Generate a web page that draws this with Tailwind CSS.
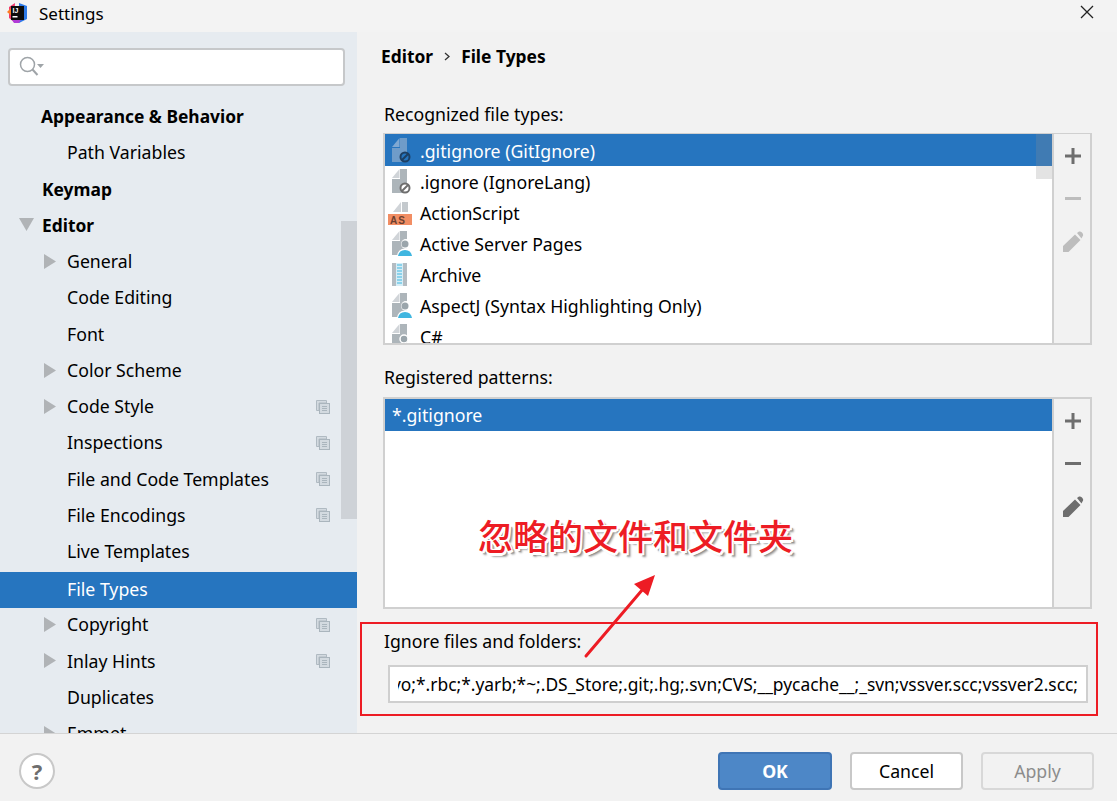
<!DOCTYPE html>
<html lang="en">
<head>
    <meta charset="UTF-8">
    <title>Settings</title>
    <script src="https://cdn.jsdelivr.net/npm/@tailwindcss/browser@4"></script>
</head>
<body class="bg-[#f2f2f2]">
    <svg width="0" height="0" class="absolute">
        <defs>
            <symbol id="file" viewBox="0 0 24 28">
                <path d="M11 2 H18 V26 H3 V12 H11 Z" fill="#adb5ba"/>
                <path d="M3 11 L10.500 2 V11 Z" fill="#d0d4d8"/>
            </symbol>
            <symbol id="copy" viewBox="0 0 14 14">
                <path d="M0.5 0.5 H10.5 V3 H3 V10.5 H0.5 Z" fill="#d3dae0" stroke="#b0bac2"/>
                <rect x="3.5" y="3.5" width="10" height="10" fill="#d3dae0" stroke="#aab5bd"/>
                <path d="M6 6.5 H11 M6 8.5 H11 M6 10.5 H11" stroke="#aab5bd"/>
            </symbol>
            <symbol id="plus" viewBox="0 0 18 18">
                <path d="M7.5 1 H10.5 V7.5 H17 V10.5 H10.5 V17 H7.5 V10.5 H1 V7.5 H7.5 Z"/>
            </symbol>
            <symbol id="pencil" viewBox="0 0 22 22">
                <path d="M1 21 V15 L13 3.500 L18.500 9 L6.500 21 Z M15 2 L17 0.500 Q18.500 0 20 1.500 L21 3 Q21.500 4.500 20.500 5.500 L19.500 7.500 Z"/>
            </symbol>
        </defs>
    </svg>

    <div class="relative w-[1117px] h-[801px] overflow-hidden flex flex-col bg-[#f2f2f2] text-black text-[17.7px] font-['Noto_Sans','Noto_Sans_CJK_SC',sans-serif]">
        <!-- Title bar -->
        <div class="h-[32px] flex items-center shrink-0 pl-[7px] bg-[#f3f3f3]">
            <svg width="20" height="20" viewBox="0 0 20 20" class="mt-[-6px]">
                <path d="M2 4 L8 0 L7 19 L2 15 Z" fill="#f0386b"/>
                <path d="M0 9 L6 3 L6 14 Z" fill="#fd7a24"/>
                <path d="M12 0 L20 3 L20 16 L12 20 Z" fill="#2d7ae8"/>
                <path d="M5 17 L15 15 L12 20 L7 20 Z" fill="#b13bd6"/>
                <rect x="4" y="3" width="13" height="14" fill="#0c0c0c"/>
                <text x="5.500" y="10" font-size="7" font-weight="700" fill="#fff" font-family="Liberation Sans">IJ</text>
                <rect x="5.500" y="13" width="5" height="1.500" fill="#fff"/>
            </svg>
            <span class="ml-[12px] text-[17px] mt-[-4px]">Settings</span>
            <svg width="14" height="14" viewBox="0 0 14 14" class="ml-auto mr-[23px] mt-[-8px]">
                <path d="M1 1 L13 13 M13 1 L1 13" stroke="#222" stroke-width="1.300"/>
            </svg>
        </div>

        <div class="flex flex-1 min-h-0">
            <!-- Sidebar -->
            <aside class="relative w-[357px] shrink-0 bg-[#e6ebf0] overflow-hidden pt-[16px]">
                <div class="ml-[8px] w-[337px] h-[38px] bg-white border-2 border-[#c6c8ca] rounded-[4px] flex items-center pl-[9px]">
                    <svg width="26" height="22" viewBox="0 0 26 22">
                        <circle cx="8.500" cy="8.500" r="7" fill="none" stroke="#9fa4a8" stroke-width="1.500"/>
                        <path d="M13.500 13.500 L18.500 19" stroke="#9fa4a8" stroke-width="2"/>
                        <path d="M18 8 H25 L21.500 12 Z" fill="#9fa4a8"/>
                    </svg>
                </div>

                <div class="mt-[12.4px]">
                    <div class="h-[36.25px] flex items-center pl-[41px] font-bold text-[17.4px]">Appearance &amp; Behavior</div>
                    <div class="h-[36.25px] flex items-center pl-[67px]">Path Variables</div>
                    <div class="h-[36.25px] flex items-center pl-[42px] font-bold text-[17.4px]">Keymap</div>
                    <div class="h-[36.25px] flex items-center pl-[19px] font-bold text-[17.4px]">
                        <svg width="15" height="13" viewBox="0 0 15 13" class="mr-[8px] mt-[-2px]"><path d="M0 0 H15 L7.500 13 Z" fill="#b0b3b6"/></svg>
                        Editor
                    </div>
                    <div class="h-[36.25px] flex items-center pl-[44px]">
                        <svg width="12" height="15" viewBox="0 0 12 15" class="mr-[11px]"><path d="M0 0 L12 7.500 L0 15 Z" fill="#b0b3b6"/></svg>
                        General
                    </div>
                    <div class="h-[36.25px] flex items-center pl-[67px]">Code Editing</div>
                    <div class="h-[36.25px] flex items-center pl-[67px]">Font</div>
                    <div class="h-[36.25px] flex items-center pl-[44px]">
                        <svg width="12" height="15" viewBox="0 0 12 15" class="mr-[11px]"><path d="M0 0 L12 7.500 L0 15 Z" fill="#b0b3b6"/></svg>
                        Color Scheme
                    </div>
                    <div class="h-[36.25px] flex items-center pl-[44px]">
                        <svg width="12" height="15" viewBox="0 0 12 15" class="mr-[11px]"><path d="M0 0 L12 7.500 L0 15 Z" fill="#b0b3b6"/></svg>
                        Code Style
                        <svg width="14" height="14" class="ml-auto mr-[27px]"><use href="#copy"/></svg>
                    </div>
                    <div class="h-[36.25px] flex items-center pl-[67px]">
                        Inspections
                        <svg width="14" height="14" class="ml-auto mr-[27px]"><use href="#copy"/></svg>
                    </div>
                    <div class="h-[36.25px] flex items-center pl-[67px]">
                        File and Code Templates
                        <svg width="14" height="14" class="ml-auto mr-[27px]"><use href="#copy"/></svg>
                    </div>
                    <div class="h-[36.25px] flex items-center pl-[67px]">
                        File Encodings
                        <svg width="14" height="14" class="ml-auto mr-[27px]"><use href="#copy"/></svg>
                    </div>
                    <div class="h-[36.25px] flex items-center pl-[67px]">Live Templates</div>
                    <div class="relative z-10 mt-[2.35px] mb-[-1.75px] h-[36.25px] pb-[2px] flex items-center pl-[67px] bg-[#2675bf] text-white">File Types</div>
                    <div class="h-[36.25px] flex items-center pl-[44px]">
                        <svg width="12" height="15" viewBox="0 0 12 15" class="mr-[11px]"><path d="M0 0 L12 7.500 L0 15 Z" fill="#b0b3b6"/></svg>
                        Copyright
                        <svg width="14" height="14" class="ml-auto mr-[27px]"><use href="#copy"/></svg>
                    </div>
                    <div class="h-[36.25px] flex items-center pl-[44px]">
                        <svg width="12" height="15" viewBox="0 0 12 15" class="mr-[11px]"><path d="M0 0 L12 7.500 L0 15 Z" fill="#b0b3b6"/></svg>
                        Inlay Hints
                        <svg width="14" height="14" class="ml-auto mr-[27px]"><use href="#copy"/></svg>
                    </div>
                    <div class="h-[36.25px] flex items-center pl-[67px]">Duplicates</div>
                    <div class="h-[36.25px] flex items-center pl-[44px]">
                        <svg width="12" height="15" viewBox="0 0 12 15" class="mr-[11px]"><path d="M0 0 L12 7.500 L0 15 Z" fill="#b0b3b6"/></svg>
                        Emmet
                    </div>
                </div>

                <!-- Scrollbar thumb -->
                <div class="absolute left-[341px] top-[189px] w-[16px] h-[298px] bg-[#ced2d7]"></div>
            </aside>

            <!-- Right panel -->
            <main class="flex-1 min-w-0 pl-[26px] pr-[25px] pt-[12px]">
                <div class="h-[24px] flex items-center ml-[-2px] font-bold text-[17.4px]">
                    Editor
                    <svg width="6" height="9" viewBox="0 0 6 9" class="mx-[11px]"><path d="M1 1 L5 4.500 L1 8" fill="none" stroke="#333" stroke-width="1.300"/></svg>
                    File Types
                </div>

                <div class="mt-[34px] h-[24px] flex items-center pl-[1px]">Recognized file types:</div>
                <div class="mt-[7px] h-[212px] flex border-2 border-t border-[#d0d0d0]">
                    <div class="relative flex-1 min-w-0 bg-white overflow-hidden">
                        <div class="h-[32px] pt-[2px] flex items-center bg-[#2675bf] text-white pl-[35px] relative">
                            <svg width="24" height="28" class="absolute left-[4px] top-[2px]" viewBox="0 0 24 28">
                                <path d="M11 2 H18 V26 H3 V12 H11 Z" fill="#6f9cc9"/>
                                <path d="M3 11 L10.500 2 V11 Z" fill="#7fa8d2"/>
                                <circle cx="16" cy="21" r="4.500" fill="#2675bf" stroke="#1d3f63" stroke-width="2"/>
                                <path d="M13 24 L19 18" stroke="#1d3f63" stroke-width="2"/>
                            </svg>
                            .gitignore (GitIgnore)
                        </div>
                        <div class="h-[31px] pt-[2px] flex items-center pl-[35px] relative">
                            <svg width="24" height="28" class="absolute left-[4px] top-[1px]" viewBox="0 0 24 28">
                                <use href="#file"/>
                                <circle cx="16" cy="21" r="4.500" fill="#fff" stroke="#6e6e6e" stroke-width="2"/>
                                <path d="M13 24 L19 18" stroke="#6e6e6e" stroke-width="2"/>
                            </svg>
                            .ignore (IgnoreLang)
                        </div>
                        <div class="h-[31px] pt-[2px] flex items-center pl-[35px] relative">
                            <svg width="24" height="28" class="absolute left-[3px] top-[1px]" viewBox="0 0 24 28">
                                <path d="M5 14 L13 4 V14 Z" fill="#d0d4d8"/>
                                <path d="M14 4 H20 V14 H14 Z" fill="#c4c9cd"/>
                                <rect x="0" y="16" width="24" height="11" fill="#f28e64"/>
                                <text x="2" y="25.500" font-size="10" font-weight="700" letter-spacing="1" fill="#6b4030" font-family="Liberation Sans">AS</text>
                            </svg>
                            ActionScript
                        </div>
                        <div class="h-[31px] pt-[2px] flex items-center pl-[35px] relative">
                            <svg width="24" height="28" class="absolute left-[4px] top-[1px]" viewBox="0 0 24 28">
                                <use href="#file"/>
                                <circle cx="17" cy="15" r="5" fill="#fff"/>
                                <path d="M8 27 Q9 19.500 16 19.500 Q23 19.500 24 27 Z" fill="#fff"/>
                                <path d="M9 27 Q10 21 16 21 Q22 21 23 27 Z" fill="#40b6e0"/>
                                <circle cx="16" cy="15" r="3.500" fill="#9aa5ab"/>
                            </svg>
                            Active Server Pages
                        </div>
                        <div class="h-[31px] pt-[2px] flex items-center pl-[35px] relative">
                            <svg width="24" height="28" class="absolute left-[4px] top-[1px]" viewBox="0 0 24 28">
                                <rect x="3" y="3" width="15" height="23" fill="#b4bcc2"/>
                                <rect x="7" y="3" width="7" height="23" fill="#d6eef7"/>
                                <path d="M8 5 H13 M8 8 H13 M8 11 H13 M8 14 H13 M8 17 H13 M8 20 H13 M8 23 H13" stroke="#40b6e0" stroke-width="1.200"/>
                            </svg>
                            Archive
                        </div>
                        <div class="h-[31px] pt-[2px] flex items-center pl-[35px] relative">
                            <svg width="24" height="28" class="absolute left-[4px] top-[1px]" viewBox="0 0 24 28">
                                <use href="#file"/>
                                <circle cx="17" cy="15" r="5" fill="#fff"/>
                                <path d="M8 27 Q9 19.500 16 19.500 Q23 19.500 24 27 Z" fill="#fff"/>
                                <path d="M9 27 Q10 21 16 21 Q22 21 23 27 Z" fill="#40b6e0"/>
                                <circle cx="16" cy="15" r="3.500" fill="#9aa5ab"/>
                            </svg>
                            AspectJ (Syntax Highlighting Only)
                        </div>
                        <div class="h-[31px] pt-[2px] flex items-center pl-[35px] relative">
                            <svg width="24" height="28" class="absolute left-[4px] top-[1px]" viewBox="0 0 24 28">
                                <use href="#file"/>
                                <circle cx="15" cy="17" r="4" fill="#9aa5ab" stroke="#fff" stroke-width="1.500"/>
                            </svg>
                            C#
                        </div>
                        <!-- List scrollbar -->
                        <div class="absolute right-0 top-0 w-[16px] h-[45px] bg-[#8f8f8f]/25"></div>
                    </div>
                    <div class="w-[38px] shrink-0 border-l-2 border-[#d0d0d0] pl-[2px] flex flex-col">
                        <div class="h-[43px] flex items-center justify-center fill-[#6e6e6e]"><svg width="18" height="18"><use href="#plus"/></svg></div>
                        <div class="h-[43px] flex items-center justify-center"><div class="w-[16px] h-[3px] bg-[#bdbdbd]"></div></div>
                        <div class="h-[43px] flex items-center justify-center fill-[#bdbdbd]"><svg width="22" height="22"><use href="#pencil"/></svg></div>
                    </div>
                </div>

                <div class="mt-[20px] h-[24px] flex items-center pl-[1px]">Registered patterns:</div>
                <div class="mt-[8px] h-[212px] flex border-2 border-[#d0d0d0]">
                    <div class="flex-1 min-w-0 bg-white overflow-hidden">
                        <div class="h-[32px] flex items-center bg-[#2675bf] text-white pl-[7px]">*.gitignore</div>
                    </div>
                    <div class="w-[38px] shrink-0 border-l-2 border-[#d0d0d0] pl-[2px] flex flex-col">
                        <div class="h-[43px] flex items-center justify-center fill-[#6e6e6e]"><svg width="18" height="18"><use href="#plus"/></svg></div>
                        <div class="h-[43px] flex items-center justify-center"><div class="w-[16px] h-[3px] bg-[#6e6e6e]"></div></div>
                        <div class="h-[43px] flex items-center justify-center fill-[#6e6e6e]"><svg width="22" height="22"><use href="#pencil"/></svg></div>
                    </div>
                </div>

                <div class="mt-[20px] h-[24px] flex items-center pl-[1px]">Ignore files and folders:</div>
                <div class="mt-[12px] ml-[5px] w-[700px] h-[38px] bg-white border-2 border-[#cfcfcf] px-[8px] flex items-center text-[17.4px]">
                    <div class="w-full overflow-hidden flex justify-end whitespace-nowrap">
                        <span class="shrink-0">*.pyc;*.pyo;*.rbc;*.yarb;*~;.DS_Store;.git;.hg;.svn;CVS;__pycache__;_svn;vssver.scc;vssver2.scc;</span>
                    </div>
                </div>
            </main>
        </div>

        <!-- Footer -->
        <footer class="relative z-10 h-[68px] shrink-0 border-t border-[#d4d4d4] bg-[#f2f2f2] flex items-center pt-[7px] pl-[19px] pr-[23px]">
            <div class="w-[36px] h-[36px] rounded-full bg-white border-2 border-[#c8c8c8] flex items-center justify-center font-bold text-[22px] text-[#6e6e6e]">?</div>
            <button class="ml-auto w-[114px] h-[38px] rounded-[4px] bg-[#4d87c7] border-2 border-[#3f75b5] text-white font-bold">OK</button>
            <button class="ml-[18px] w-[113px] h-[38px] rounded-[4px] bg-white border-2 border-[#c8c8c8]">Cancel</button>
            <button class="ml-[18px] w-[113px] h-[38px] rounded-[4px] bg-[#f2f2f2] border-2 border-[#d8d8d8] text-[#8c8c8c]">Apply</button>
        </footer>

        <!-- Annotations drawn over the window -->
        <div class="absolute left-[360px] top-[622px] w-[738px] h-[94px] border-2 border-[#ed1c24]"></div>
        <svg class="absolute left-[570px] top-[560px]" width="100" height="110" viewBox="570 560 100 110">
            <path d="M586 656 L643 589" stroke="#ed1c24" stroke-width="3" stroke-linecap="round"/>
            <path d="M655 575 L648 596 L634 584 Z" fill="#ed1c24"/>
        </svg>
        <div class="absolute left-[478px] top-[512px] text-[35px] leading-[50px] font-medium whitespace-nowrap text-[#ed1c24] [text-shadow:-1px_-1px_0_#fff,1px_-1px_0_#fff,-1px_1px_0_#fff,2px_2px_0_#fff,-2px_0_0_#fff,0_3px_0_#fff,3px_3px_1px_#8f8f8f,4px_4px_2px_#b0b0b0]">忽略的文件和文件夹</div>
    </div>
</body>
</html>
